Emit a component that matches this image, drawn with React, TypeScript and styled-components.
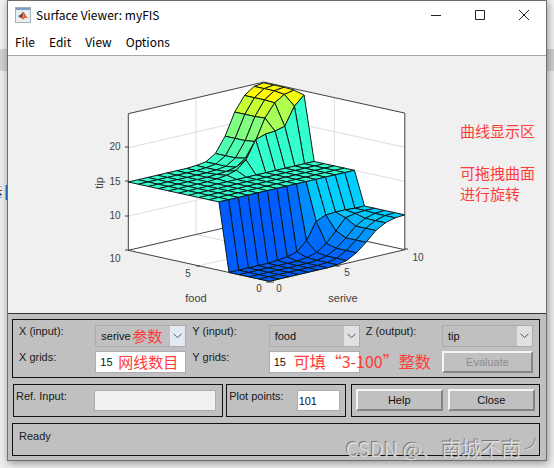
import React from "react";
import styled, { createGlobalStyle } from "styled-components";

const cjk = `"Noto Sans CJK SC", "Noto Sans", sans-serif`;
const arial = `"Liberation Sans", Arial, sans-serif`;

const GlobalStyle = createGlobalStyle`
  * { box-sizing: border-box; }
  body { margin: 0; background: #eeeeee; font-family: ${arial}; font-size: 11px; color: #1a1a1a; }
`;

const Desktop = styled.div`
  position: relative;
  min-height: 100vh;
  padding: 0 7px 7px;
  overflow: hidden;
  background: linear-gradient(#f2f2f2 49px, #cfd1d3 49px, #cfd1d3 71px, #eeeeee 71px);
`;

const Behind = styled.svg`
  position: absolute;
  z-index: 1;
  left: 0;
  top: 184px;
`;

const Window = styled.main`
  position: relative;
  border: 1px solid #6e6e6e;
  background: #f0f0f0;
  box-shadow: 1px 2px 8px rgba(0, 0, 0, 0.4);
`;

const TitleBar = styled.header`
  display: flex;
  align-items: center;
  height: 28px;
  padding-left: 7px;
  background: #fff;
`;

const Title = styled.h1`
  flex: 1;
  margin: 0 0 0 5px;
  font: 12px/18px ${cjk};
  color: #000;
`;

const Caption = styled.button`
  display: grid;
  place-items: center;
  width: 44px;
  height: 28px;
  padding: 0;
  border: 0;
  background: transparent;
`;

const MenuBar = styled.nav`
  display: flex;
  gap: 14px;
  height: 27px;
  padding: 4px 7px;
  background: #fff;
  border-bottom: 1px solid #a8a8a8;
`;

const MenuItem = styled.button`
  padding: 0;
  border: 0;
  background: transparent;
  font: 12px/18px ${cjk};
  color: #000;
`;

const Figure = styled.section`
  position: relative;
  border-bottom: 1px solid #333;
`;

const Plot = styled.svg`
  display: block;
  width: 100%;
  height: auto;
`;

const Notes = styled.aside`
  position: absolute;
  top: 64px;
  right: 11px;
  font: 15px/21px ${cjk};
  color: #ff3b3b;
`;

const Note = styled.p`
  margin: 0 0 21px;
`;

const Panel = styled.form`
  display: flex;
  flex-direction: column;
  gap: 6px;
  padding: 5px 6px 4px 4px;
  background: #c0c0c0;
`;

const Frame = styled.div<{ $grow?: number }>`
  flex: ${(p) => (p.$grow ? `${p.$grow} 1 0` : "none")};
  min-width: 0;
  border: 1px solid #111;
`;

const FieldGrid = styled(Frame)`
  display: grid;
  grid-template-columns: repeat(3, 1fr);
  gap: 4px 6px;
  padding: 5px 6px 4px;
`;

const Field = styled.div`
  display: flex;
  justify-content: space-between;
`;

const Label = styled.label`
  white-space: nowrap;
  line-height: 13px;
`;

const Control = styled.div`
  position: relative;
  width: 91px;
  height: 22px;
`;

const Select = styled.select`
  appearance: none;
  width: 100%;
  height: 22px;
  padding: 0 20px 0 5px;
  border: 1px solid #acacb0;
  border-radius: 0;
  background: #c0c0c0;
  font: 11px/14px ${arial};
  color: #111;
`;

const Arrow = styled.span<{ $hot?: boolean }>`
  position: absolute;
  top: 1px;
  right: 1px;
  display: grid;
  place-items: center;
  width: 15px;
  height: 20px;
  background: ${(p) => (p.$hot ? "#e2ebf4" : "#e1e1e1")};
  pointer-events: none;
`;

const TextBox = styled.input<{ $idle?: boolean; $tight?: boolean }>`
  width: 100%;
  height: ${(p) => (p.$tight || p.$idle ? 21 : 22)}px;
  padding: 0 ${(p) => (p.$tight ? 1 : 4)}px;
  border: 1px solid #acacb4;
  background: ${(p) => (p.$idle ? "#f0f0f0" : "#fff")};
  font: 11px/14px ${arial};
  color: #111;
`;

const Remark = styled.span<{ $left: number; $large?: boolean }>`
  position: absolute;
  z-index: 1;
  left: ${(p) => p.$left}px;
  top: 0;
  font: ${(p) => (p.$large ? 16 : 15)}px/21px ${cjk};
  color: #ff3b3b;
  white-space: nowrap;
  pointer-events: none;
`;

const PushButton = styled.button`
  flex: 1;
  width: 100%;
  height: 22px;
  padding: 0;
  border: 2px solid;
  border-color: #f4f4f4 #858585 #858585 #f4f4f4;
  background: #c0c0c0;
  font: 11px/14px ${arial};
  color: #111;
  &:disabled { color: #8c8c8c; }
`;

const Row = styled.div`
  display: flex;
  padding-left: 1px;
`;

const RefFrame = styled(Frame)`
  display: flex;
  justify-content: space-between;
  height: 33px;
  margin-right: 3px;
  padding: 5px 6px 5px 2px;
`;

const PointsFrame = styled(RefFrame)`
  margin-right: 5px;
  padding-right: 5px;
`;

const ButtonFrame = styled(Frame)`
  display: flex;
  gap: 5px;
  height: 33px;
  padding: 4px;
`;

const RefBox = styled.div`
  width: 61%;
`;

const PointsBox = styled.div`
  width: 43px;
`;

const Status = styled(Frame)`
  height: 33px;
  padding: 5px 6px;
  line-height: 14px;
`;

const Watermark = styled.span`
  position: absolute;
  right: 0;
  bottom: -3px;
  font: 20px/28px ${cjk};
  color: rgba(228, 228, 228, 0.85);
  text-shadow: -1px -1px 0 rgba(90, 90, 90, 0.7);
  white-space: nowrap;
  pointer-events: none;
`;

/* Surface heights on a 15 x 15 grid: one profile along "serive" per "food" step. */
const flat = (n: number, v: number): number[] => Array(n).fill(v);
const low = [...flat(7, 5), 5.1, 5.4, 6.2, 7.4, 8.8, 9.6, 10, 10.1];
const lowNear = [...flat(7, 5), 5.2, 5.6, 6.6, 8.1, 9.7, 10, 10.1, 10.1];
const lowEdge = [...flat(5, 5), 5.1, 5.3, 5.7, 7, 9.5, 10.1, 10.2, 10.2, 10.1, 10.1];
const middle = flat(15, 15);
const highEdge = [...flat(5, 15), 15.1, 15.3, 15.7, 16.9, 19.5, 20, 20.1, 20.5, 23.1, 24.4];
const highNear = [...flat(6, 15), 15.1, 15.2, 15.5, 16.5, 18.6, 21.7, 23.6, 24.5, 24.8];
const high = [...flat(7, 15), 15.1, 15.3, 16.2, 18.4, 21.6, 23.7, 24.7, 24.9];
const surface = [
  low, low, low, lowNear, lowEdge,
  middle, middle, middle, middle, middle,
  highEdge, highNear, high, high, high,
];

type Point = [number, number];
const project = (x: number, y: number, z: number): Point => [
  261.3 + 13.55 * x - 14.1 * y,
  225.3 - 3.16 * x - 3.1 * y - 6.83 * (z - 5),
];

const stops: [number, number[]][] = [
  [5, [0, 92, 255]],
  [7, [0, 140, 255]],
  [9.5, [0, 200, 255]],
  [10.3, [0, 208, 255]],
  [15, [51, 255, 204]],
  [18.4, [128, 255, 128]],
  [21.6, [200, 255, 50]],
  [23.7, [255, 250, 0]],
  [26, [255, 238, 0]],
];
const shade = (z: number) => {
  const k = Math.max(1, stops.findIndex(([s]) => z <= s));
  const [a, ca] = stops[k - 1];
  const [b, cb] = stops[k];
  return `rgb(${ca.map((v, n) => Math.round(v + ((cb[n] - v) * (z - a)) / (b - a))).join(",")})`;
};

const step = 10 / 14;
const path = (...pts: [number, number, number][]) => pts.map((p) => project(...p).join(",")).join(" ");

const cells: { key: string; depth: number; points: string; fill: string }[] = [];
for (let j = 0; j < 14; j++) {
  for (let i = 0; i < 14; i++) {
    const at = (a: number, b: number): [number, number, number] => [a * step, b * step, surface[b][a]];
    cells.push({
      key: `${i}-${j}`,
      depth: i + j,
      points: path(at(i, j), at(i + 1, j), at(i + 1, j + 1), at(i, j + 1)),
      fill: shade(surface[j][i]),
    });
  }
}
cells.sort((a, b) => b.depth - a.depth);

const gridLines = [
  path([5, 10, 25], [5, 10, 5], [5, 0, 5]),
  path([10, 5, 25], [10, 5, 5], [0, 5, 5]),
  ...[10, 15, 20].map((z) => path([0, 10, z], [10, 10, z], [10, 0, z])),
];

const axisText: [string, number, number][] = [
  ["20", 107, 94], ["15", 107, 129], ["10", 107, 163],
  ["10", 107, 206], ["5", 180, 221], ["0", 251, 236],
  ["0", 271, 236], ["5", 339, 220], ["10", 410, 205],
];

function SurfacePlot() {
  return (
    <Plot viewBox="0 0 538 257" role="img" aria-label="tip as a function of serive and food">
      <polygon
        fill="#fff"
        points={path([0, 10, 25], [10, 10, 25], [10, 0, 25], [10, 0, 5], [0, 0, 5], [0, 10, 5])}
      />
      <g fill="none" stroke="#dcdcdc">
        {gridLines.map((p) => <polyline key={p} points={p} />)}
      </g>
      <g fill="none" stroke="#404040">
        <polygon points={path([0, 10, 25], [10, 10, 25], [10, 0, 25], [10, 0, 5], [0, 0, 5], [0, 10, 5])} />
        <polyline points={path([0, 10, 5], [10, 10, 5], [10, 0, 5])} />
        <path d="M117 194h4M117 160h4M117 125h4M117 91h4M188 210h4M258 226h8M328 210h4M396 193h4" />
      </g>
      <g stroke="#0a1a1a" strokeWidth="1" strokeLinejoin="round">
        {cells.map((c) => <polygon key={c.key} points={c.points} fill={c.fill} />)}
      </g>
      <g fontFamily="Liberation Sans, Arial, sans-serif" fontSize="10" fill="#404040" textAnchor="middle">
        {axisText.map(([t, x, y]) => (
          <text key={`${t}-${x}-${y}`} x={x} y={y}>{t}</text>
        ))}
        <g fontSize="11">
          <text x="188" y="246">food</text>
          <text x="335" y="246">serive</text>
          <text transform="translate(95 127) rotate(-90)">tip</text>
        </g>
      </g>
    </Plot>
  );
}

function MatlabIcon() {
  return (
    <svg width="16" height="16" viewBox="0 0 16 16" aria-hidden="true">
      <rect x=".5" y=".5" width="15" height="15" fill="#e9edf1" stroke="#a3afbb" />
      <path d="M1 1h14v2H1z" fill="#7f9fc2" />
      <path d="M3 9l3-1.500 1.500 1.500L5.500 11z" fill="#2d6aa8" />
      <path d="M5.500 7.700L8 5v4.500L5.500 11z" fill="#5a4468" />
      <path d="M8 4.500c1.500 1 2.500 4 5 7l-2.500-1-2.500 2-2-1.500c1.500-1 1.500-4 2-6.500z" fill="#dc5a1c" />
      <path d="M8.300 5.500l1 3.500-1.300 2.500z" fill="#f7a63b" />
    </svg>
  );
}

function Picker({ id, label, value, hot, remark }: {
  id: string; label: string; value: string; hot?: boolean; remark?: string;
}) {
  return (
    <Field>
      <Label htmlFor={id}>{label}</Label>
      <Control>
        <Select id={id} defaultValue={value}><option>{value}</option></Select>
        <Arrow $hot={hot}>
          <svg width="9" height="6" viewBox="0 0 9 6" fill="none" stroke="#505050" aria-hidden="true">
            <path d="M.5 .7l4 4 4-4" />
          </svg>
        </Arrow>
        {remark && <Remark $left={37}>{remark}</Remark>}
      </Control>
    </Field>
  );
}

function GridCount({ id, label, remark, left, large }: {
  id: string; label: string; remark: string; left: number; large?: boolean;
}) {
  return (
    <Field>
      <Label htmlFor={id}>{label}</Label>
      <Control>
        <TextBox id={id} defaultValue="15" />
        <Remark $left={left} $large={large}>{remark}</Remark>
      </Control>
    </Field>
  );
}

export default function App() {
  return (
    <Desktop>
      <GlobalStyle />
      <Behind width="8" height="18" aria-hidden="true">
        <path d="M0 2.500h2M0 13.500h2" stroke="#7db8e8" />
        <path d="M0 6.500h2" stroke="#8a3a3a" />
        <path d="M0 10.500h1.500" stroke="#1a2c78" strokeWidth="2" />
        <path d="M5.500 1v15" stroke="#c79a68" />
        <path d="M6.500 1v15" stroke="#1f5fa8" />
      </Behind>
      <Window>
        <TitleBar>
          <MatlabIcon />
          <Title>Surface Viewer: myFIS</Title>
          <Caption aria-label="Minimize">
            <svg width="10" height="10" stroke="#222"><path d="M0 5.5h10" /></svg>
          </Caption>
          <Caption aria-label="Maximize">
            <svg width="10" height="10" stroke="#222" fill="none"><path d="M.5 .5h9v9h-9z" /></svg>
          </Caption>
          <Caption aria-label="Close window">
            <svg width="10" height="10" stroke="#222"><path d="M0 0l10 10M10 0L0 10" /></svg>
          </Caption>
        </TitleBar>
        <MenuBar>
          {["File", "Edit", "View", "Options"].map((m) => <MenuItem key={m}>{m}</MenuItem>)}
        </MenuBar>
        <Figure>
          <SurfacePlot />
          <Notes>
            <Note>曲线显示区</Note>
            <Note>可拖拽曲面<br />进行旋转</Note>
          </Notes>
        </Figure>
        <Panel onSubmit={(e) => e.preventDefault()}>
          <FieldGrid>
            <Picker id="x-input" label="X (input):" value="serive" hot remark="参数" />
            <Picker id="y-input" label="Y (input):" value="food" />
            <Picker id="z-output" label="Z (output):" value="tip" />
            <GridCount id="x-grids" label="X grids:" remark="网线数目" left={23} />
            <GridCount id="y-grids" label="Y grids:" remark="可填“3-100”整数" left={25} large />
            <Field>
              <span />
              <Control><PushButton disabled>Evaluate</PushButton></Control>
            </Field>
          </FieldGrid>
          <Row>
            <RefFrame $grow={212}>
              <Label htmlFor="ref">Ref. Input:</Label>
              <RefBox><TextBox id="ref" $idle /></RefBox>
            </RefFrame>
            <PointsFrame $grow={117}>
              <Label htmlFor="points">Plot points:</Label>
              <PointsBox><TextBox id="points" defaultValue="101" $tight /></PointsBox>
            </PointsFrame>
            <ButtonFrame $grow={190}>
              <PushButton type="button">Help</PushButton>
              <PushButton type="button">Close</PushButton>
            </ButtonFrame>
          </Row>
          <Status role="status">Ready</Status>
        </Panel>
        <Watermark>CSDN @、南城不南 ╯</Watermark>
      </Window>
    </Desktop>
  );
}
